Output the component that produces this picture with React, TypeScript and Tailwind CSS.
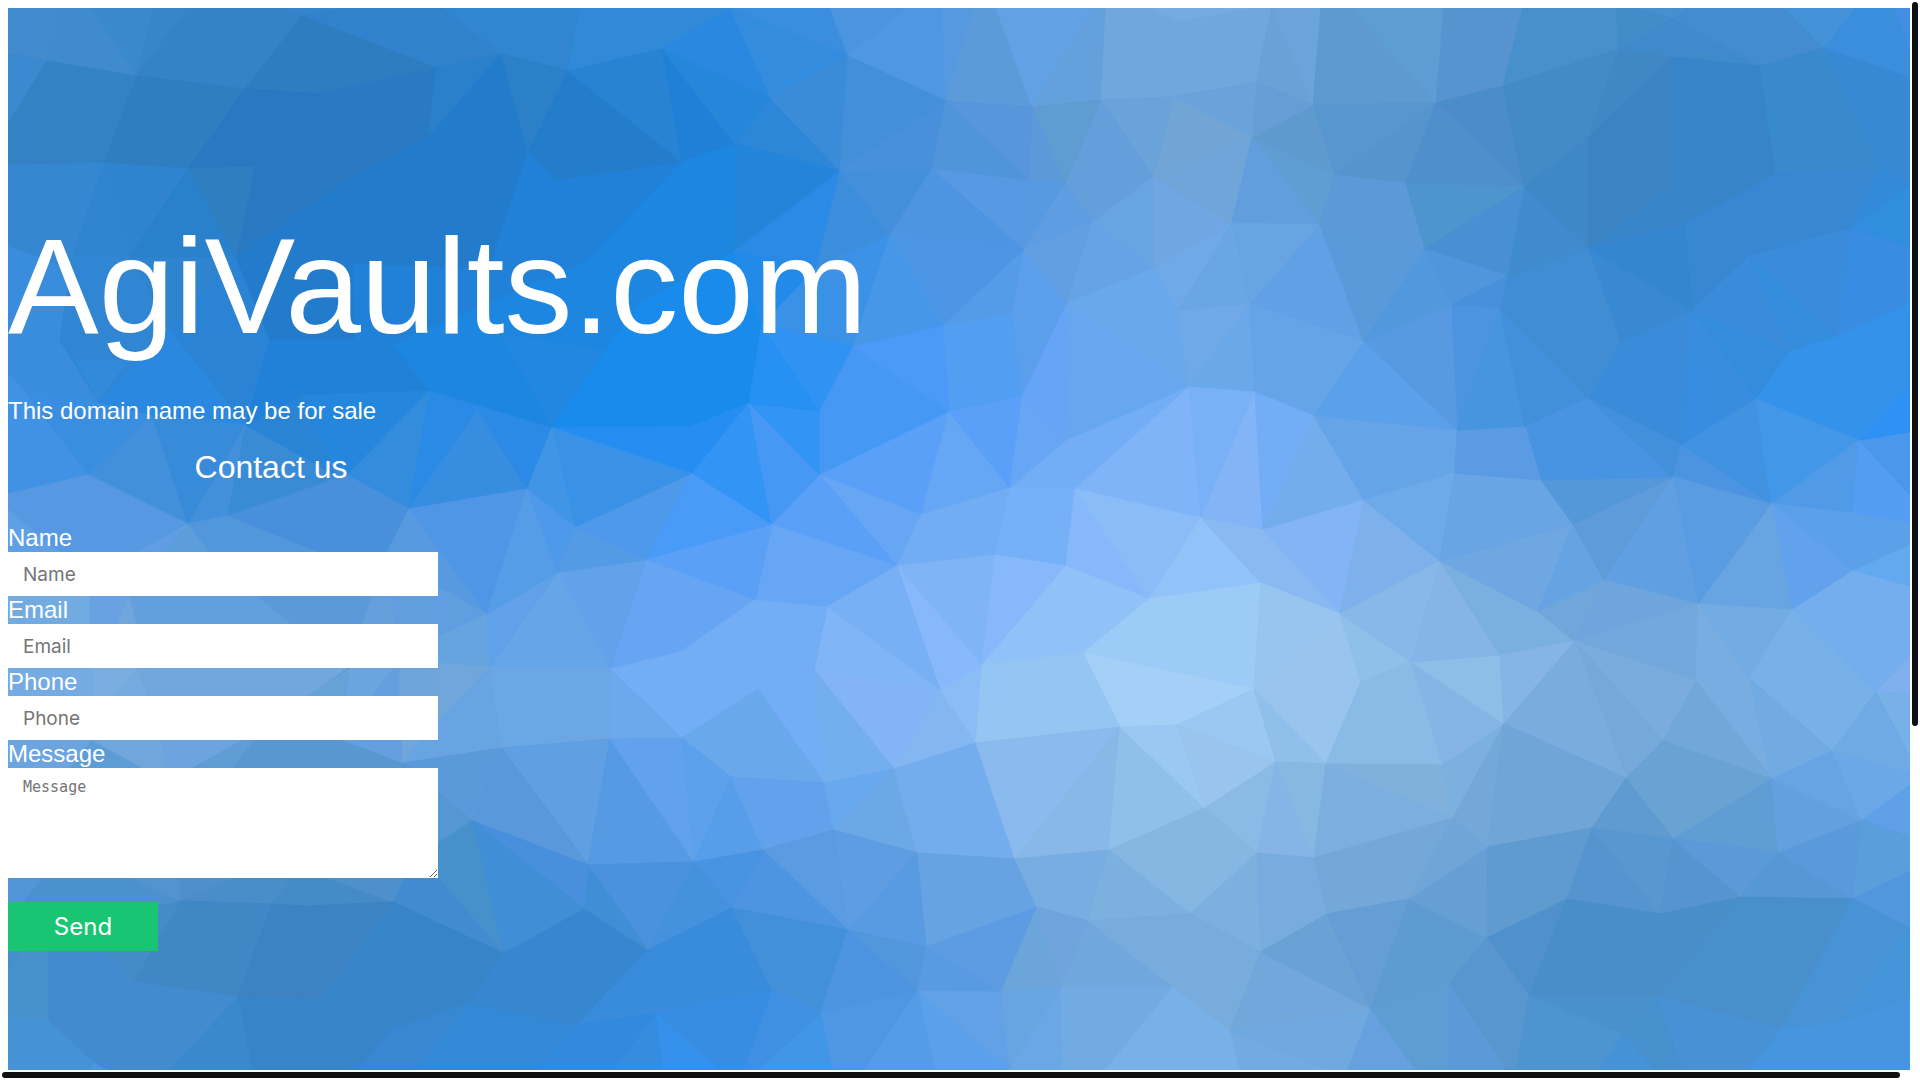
import { clsx } from "clsx";

// Corner points shared by the facets of the backdrop.
const points: Record<string, string> = {
  A1: "47,61", A2: "137,76", A3: "245,89", A4: "317,94", A5: "436,68", A6: "302,16", A7: "429,136", A8: "104,163",
  A9: "188,169", A10: "254,167", A11: "236,257", A12: "130,258", A13: "333,190",
  B1: "501,54", B2: "568,71", B3: "662,49", B4: "528,152", B5: "557,179", B6: "682,162", B7: "735,144", B8: "771,99",
  B9: "730,8", B10: "848,56", B11: "830,8", B12: "946,101", B13: "840,171", B14: "932,169", B15: "890,235",
  B16: "733,252", B17: "817,267", B18: "853,347", B19: "943,326", B20: "762,325",
  C1: "1436,103", C2: "1425,249", C3: "1406,183", C4: "1364,342", C5: "1320,225", C6: "1334,175", C7: "1313,105",
  C8: "1252,138", C9: "1256,82", C10: "1067,303", C11: "1101,100", C12: "1173,97", C13: "1153,177", C14: "1232,223",
  C15: "1154,268", C16: "1093,222", C17: "1065,184", C18: "1032,107", C19: "1029,181", C20: "1024,250",
  C21: "1250,304", C22: "1178,311", C23: "1012,314", C24: "1178,21",
  E1: "430,391", E2: "246,425", E3: "304,395", E4: "88,475", E5: "188,524", E6: "228,516", E7: "152,415",
  E8: "22,389", E9: "98,402", E10: "347,475", E11: "409,509", E12: "477,411",
  F1: "749,403", F2: "820,411", F3: "552,428", F4: "527,489", F5: "692,474", F6: "690,427", F7: "575,528",
  F8: "772,525", F9: "820,475", F10: "558,572", F11: "646,560", F12: "949,412", F13: "921,515", F14: "897,566",
  F15: "755,600", F16: "827,607", F17: "610,669", F18: "680,652", F19: "814,670", F20: "940,690", F21: "758,689",
  G1: "487,614", G2: "490,667", G3: "502,748",
  I1: "403,763", I2: "473,821", I3: "180,901", I4: "272,904", I5: "307,906", I6: "393,902", I7: "133,982",
  I8: "238,997", I9: "322,999", I10: "470,1003",
  J1: "588,865", J2: "584,908", J3: "503,953", J4: "577,1025", J5: "682,738", J6: "824,783", J7: "894,769",
  J9: "731,777", J10: "610,739", J11: "694,862", J12: "763,850", J13: "834,830", J14: "917,853", J15: "648,950",
  J16: "732,908", J17: "848,930", J18: "926,947", J19: "772,990", J20: "820,1014", J21: "917,991", J22: "656,1013",
  K1: "1010,488", K2: "1022,397", K3: "995,555", K4: "982,665", K5: "976,743", K6: "1066,441", K7: "1189,387",
  K8: "1255,392", K9: "1314,416", K10: "1075,489", K11: "1066,566", K12: "1201,518", K13: "1263,530",
  K14: "1364,500", K15: "1149,599", K16: "1261,583", K17: "1340,614", K18: "1083,653", K19: "1254,689",
  K20: "1361,682", K21: "1411,662", K22: "1440,561", K23: "1120,727", K24: "1177,725",
  L1: "1015,859", L2: "1037,907", L3: "1001,992", L4: "1276,762", L5: "1326,764", L6: "1205,808", L7: "1109,850",
  L8: "1257,853", L9: "1314,858", L10: "1190,914", L11: "1088,921", L12: "1061,987", L13: "1173,987",
  L14: "1261,952", L15: "1327,914", L16: "1409,899", L17: "1371,1009", L18: "1230,1031",
  M1: "1443,765", M2: "1504,724", M3: "1500,655", M4: "1453,818", M5: "1626,778", M6: "1663,741", M7: "1772,779",
  M8: "1832,751",
  N1: "1449,983", N2: "1487,938", N3: "1488,847", N4: "1592,828", N5: "1673,839", N6: "1778,852", N7: "1862,820",
  N8: "1567,899", N9: "1660,914", N10: "1741,897", N11: "1853,899", N12: "1529,996", N13: "1656,996",
  N14: "1782,1029", N15: "1622,1034", N16: "1840,1023",
  P1: "1575,641", P2: "1538,612", P3: "1604,580", P4: "1573,524", P5: "1541,480", P6: "1455,473", P7: "1457,431",
  P8: "1525,427", P9: "1588,398", P10: "1682,445", P11: "1673,477", P12: "1771,504", P13: "1756,399",
  P14: "1859,440", P15: "1698,604", P16: "1792,610", P17: "1853,571", P18: "1696,681", P19: "1749,678",
  P20: "1876,692", P21: "1853,513",
  Q1: "1503,86", Q2: "1619,49", Q3: "1672,57", Q4: "1674,18", Q5: "1760,66", Q6: "1824,48", Q7: "1588,138",
  Q8: "1672,186", Q9: "1524,187", Q10: "1588,248", Q11: "1776,174", Q12: "1880,169", Q13: "1684,224",
  Q14: "1851,228", Q15: "1749,256", Q16: "1692,311", Q17: "1836,337", Q18: "1790,352", Q19: "1620,342",
  Q20: "1507,276", Q21: "1500,309", Q22: "1451,305",
};

// Fill, then corners: a point name, or a plain x,y on the outer edge.
const facets: [string, string][] = [
  // top left
  ["#3b8acf", "8,8 60,8 A1 8,124"],
  ["#428ccd", "8,8 60,8 A1 20,53 8,53"],
  ["#408bcd", "60,8 92,8 A2 A1"],
  ["#3a89cd", "92,8 154,8 A2"],
  ["#3886ca", "154,8 188,8 A2"],
  ["#3483c6", "188,8 283,8 A6 A3 A2"],
  ["#3485ce", "283,8 345,8 A6"],
  ["#2f82cb", "345,8 443,8 B1 A5 A6"],
  ["#3285d0", "443,8 580,8 B2 B1"],
  ["#2e7dc0", "A6 A5 A4 A3"],
  ["#2a7ac3", "A4 A5 A7"],
  ["#2a80ca", "A5 B1 A7"],
  ["#3382c4", "8,124 A1 A2 A8 8,165"],
  ["#2f7ec0", "A2 A3 A9 A8"],
  ["#2878c2", "A3 A4 A7 A13 A11 A10 A9"],
  ["#2f7fc0", "A9 A10 A11"],
  ["#3487d0", "8,165 A8 73,255 60,340 8,246"],
  ["#3185d0", "A8 A12 100,300 60,340 73,255"],
  ["#3084cf", "A8 A9 A12"],
  ["#2981cb", "A9 A11 A12"],
  ["#3a8cdc", "8,246 73,270 E9 E8 8,374"],
  ["#3086d3", "73,255 A12 170,330 E9 60,340"],
  ["#2f84d0", "A12 A11 170,330"],
  ["#2b88df", "170,330 E9 E7 E2"],
  ["#2a83d4", "A11 270,340 E2 170,330"],
  ["#237ccb", "A7 B1 B4 500,235 490,269 353,264 355,340 270,340 A11 A13"],
  ["#2180d7", "270,340 355,340 353,264 490,269 B4 B5 B6 587,260 393,345 E1 E3 E2"],
  ["#2b80c8", "B1 B2 B4"],
  ["#237dcb", "B2 B6 B5 B4"],
  ["#308ad8", "580,8 B9 B3 B2"],
  ["#2883d2", "B2 B3 B6"],
  ["#2080d8", "B3 B7 B6"],
  ["#2a88e0", "B3 B9 B8"],
  ["#2586da", "B3 B8 B7"],
  ["#3b8edf", "B9 B11 B10"],
  ["#338cdd", "B9 B10 B8"],
  ["#2c87d8", "B7 B8 B13"],
  ["#2385da", "B7 B13 B16"],
  ["#1c86e0", "E1 393,345 587,260 B6 B7 B16 640,303 F3"],
  ["#2187e0", "500,333 605,350 F3"],
  ["#188bec", "F3 640,303 B16 B20 F1 F6"],
  ["#3a8cd8", "B10 B13 B8"],
  ["#2a8ae6", "B16 B13 B17"],
  ["#228bea", "B16 B17 B20"],
  ["#3c8edd", "B13 B15 B17"],
  ["#3c92e6", "B17 B15 B18"],
  ["#3a92e6", "B17 B18 B20"],
  // top middle
  ["#4a94e0", "B11 908,8 B10"],
  ["#4f97e2", "908,8 942,8 B12 B10"],
  ["#5799e0", "942,8 974,8 B12"],
  ["#5b9bda", "974,8 996,8 C18 B12"],
  ["#438fda", "B10 B12 B13"],
  ["#4990dc", "B12 B14 B13"],
  ["#438fdc", "B13 B14 B15"],
  ["#62a1e4", "996,8 1095,8 C18"],
  ["#63a0dc", "1095,8 1106,8 C11 C18"],
  ["#70a7dc", "1106,8 1272,8 C9 C12 C11"],
  ["#74ace2", "1150,8 1250,8 C24"],
  ["#69a2d6", "1272,8 C7 C9"],
  ["#6ba4da", "1272,8 1321,8 C7"],
  ["#5e9acf", "1321,8 1352,8 C1 C7"],
  ["#5e9dd4", "1352,8 1444,8 C1"],
  ["#5896d0", "C7 C1 C6"],
  ["#5694cd", "C1 C3 C6"],
  ["#5e9ace", "C7 C8 C6"],
  ["#5f9dd2", "C8 C6 C5"],
  ["#659ed4", "C9 C7 C8"],
  ["#6aa3da", "C9 C12 C8"],
  ["#70a5d6", "C12 C13 C8"],
  ["#69a3da", "C11 C12 C13"],
  ["#649fdc", "C11 C13 C16 C17"],
  ["#5e9cd2", "C18 C11 C17"],
  ["#5b99da", "C18 C17 C19"],
  ["#5796da", "B12 C18 C19"],
  ["#5095da", "B12 C19 B14"],
  ["#5799e2", "B14 C19 C20"],
  ["#4d95e2", "B14 C20 B15"],
  ["#4d96e6", "B15 C20 B19"],
  ["#4797e8", "B15 B19 B18"],
  ["#559ce8", "C20 C23 B19"],
  ["#529ef2", "B19 C23 K2 F12"],
  ["#5a9eec", "C20 C10 K2 C23"],
  ["#589ae2", "C19 C17 C20"],
  ["#5f9de2", "C17 C16 C20"],
  ["#629fe2", "C20 C16 C10"],
  ["#66a3e6", "C16 C15 C10"],
  ["#68a4e2", "C16 C13 C15"],
  ["#70a6e2", "C13 C14 C15"],
  ["#70a5da", "C13 C8 C14"],
  ["#629ede", "C8 C5 C14"],
  ["#70a9e8", "C14 C22 C15"],
  ["#6ba6e4", "C14 C21 C22"],
  ["#68a4e2", "C14 C5 C21"],
  ["#62a0e6", "C5 C4 C21"],
  ["#5a9adb", "C5 C2 C4"],
  ["#5b99d8", "C5 C6 C3 C2"],
  ["#6aa8ec", "C10 C15 C22 K7"],
  ["#70a9e8", "C22 C21 K7"],
  ["#6aa8ea", "C21 K8 K7"],
  ["#66a4e8", "C21 C4 K9 K8"],
  // top right
  ["#5794cf", "1444,8 1523,8 Q1 C1"],
  ["#4890cc", "1523,8 1616,8 Q2 Q1"],
  ["#438cca", "1616,8 1640,8 Q4 Q2"],
  ["#4790d0", "1640,8 1688,8 Q4"],
  ["#3f8acb", "Q2 Q4 Q5 Q3"],
  ["#428ccf", "Q4 1688,8 1785,8 Q6 Q5"],
  ["#4493d8", "1785,8 1856,8 Q6"],
  ["#3b8edb", "1856,8 1894,8 1910,50 1910,78 Q6"],
  ["#428ee2", "1894,8 1910,8 1910,50"],
  ["#4a8dca", "C1 Q1 Q9"],
  ["#438ac6", "Q1 Q2 Q7 Q9"],
  ["#4087c6", "Q2 Q3 Q7"],
  ["#3d82c3", "Q3 Q8 Q10 Q7"],
  ["#3f88c8", "Q9 Q7 Q10"],
  ["#3785c8", "Q3 Q5 Q11 Q13 Q10 Q8"],
  ["#3989cd", "Q5 Q6 Q12 Q11"],
  ["#3889d4", "Q6 1910,78 1910,186 Q12"],
  ["#3787d2", "Q11 Q12 Q14 Q15 Q16 Q13"],
  ["#338ad9", "Q12 1910,186 Q14"],
  ["#318dde", "1910,186 1910,249 Q14"],
  ["#388de2", "Q14 1910,249 1910,303 Q17"],
  ["#3a8cda", "Q15 Q14 Q17"],
  ["#348cdc", "Q15 Q17 Q18"],
  ["#3a8cda", "Q15 Q16 Q18"],
  ["#348cdc", "Q16 Q18 P13"],
  ["#3592ea", "Q18 Q17 1910,303 1910,385 P14 P13"],
  ["#388de0", "Q16 P13 P10"],
  ["#3a8cda", "Q16 Q19 P9 P10"],
  ["#3486d0", "Q10 Q13 Q16"],
  ["#3888d2", "Q10 Q16 Q19"],
  ["#408dd3", "Q10 Q19 P9 Q21 Q20"],
  ["#408bcd", "Q9 Q10 Q20"],
  ["#4e8fcc", "C1 C3 Q9"],
  ["#4e94ce", "C3 C2 Q9"],
  ["#4890d2", "C2 Q9 Q20"],
  ["#5196dc", "C2 Q20 Q22"],
  ["#4990dc", "Q20 Q21 Q22"],
  ["#4c94e2", "Q21 Q22 P7"],
  ["#4794df", "Q21 P7 P8"],
  ["#4290dc", "Q21 P8 P9"],
  ["#5298dd", "C2 C4 Q22"],
  ["#579ae2", "C4 Q22 P7"],
  ["#5ba0ea", "C4 P7 K9"],
  // middle left
  ["#318bda", "75,360 128,360 E9"],
  ["#398ee2", "8,374 E8 E9 E7 E4"],
  ["#4192e4", "8,374 E8 E4 8,494"],
  ["#2b88e0", "E9 170,345 E2 E7"],
  ["#4290dc", "E7 E4 E5"],
  ["#388bd9", "E7 E2 E5"],
  ["#4290dc", "E2 E6 E5"],
  ["#398bd6", "E2 E10 E6"],
  ["#2a84d6", "E2 E3 315,420 335,475"],
  ["#2486dc", "E3 E1 E10 330,460"],
  ["#338cdc", "E1 E11 E10"],
  ["#2a8be6", "E1 E12 E11"],
  ["#2a8ae6", "E1 F3 F4 E12"],
  ["#378de0", "E12 F4 E11"],
  ["#5699e2", "8,494 E4 E5 137,552 60,552 8,510"],
  ["#5f9fe6", "8,510 60,552 8,552"],
  ["#609de2", "E5 165,552 137,552"],
  ["#5b9edb", "E5 210,552 165,552"],
  ["#5297dc", "E5 E6 320,552 210,552"],
  ["#4890dc", "E6 E10 E11 387,552 320,552"],
  ["#589ae0", "E11 G1 438,587 387,552"],
  ["#4f97e6", "E11 F4 G1"],
  ["#5f9fe0", "438,587 G1 438,637"],
  ["#66a4e0", "438,637 G1 G2 438,663"],
  ["#70a6da", "438,663 G2 438,722"],
  ["#68a4e2", "G2 G3 I1 402,740 438,722"],
  // strips behind the field labels
  ["#72abe2", "8,596 90,596 90,624 8,624"],
  ["#68a2e2", "90,596 130,596 117,624 90,624"],
  ["#6fa6dc", "130,596 137,624 117,624"],
  ["#649fdd", "130,596 257,596 292,624 137,624"],
  ["#5b99da", "257,596 372,596 363,624 292,624"],
  ["#66a0dc", "372,596 391,596 395,624 363,624"],
  ["#619ddf", "391,596 438,596 438,624 395,624"],
  ["#73abe2", "8,668 94,668 94,696 8,696"],
  ["#7aaee0", "94,668 137,668 115,696 94,696"],
  ["#75abde", "137,668 148,696 115,696"],
  ["#72a7dc", "137,668 347,668 308,696 148,696"],
  ["#67a2d6", "350,668 347,696 308,696"],
  ["#6ba5e0", "350,668 393,668 373,696 347,696"],
  ["#659fe0", "393,668 400,668 400,696 373,696"],
  ["#6fa6da", "400,668 438,668 438,696 400,696"],
  ["#6ba4df", "8,740 92,740 70,768 8,768"],
  ["#5d9dd6", "92,740 143,768 70,768"],
  ["#70a6dc", "92,740 162,740 166,768 143,768"],
  ["#6ba4df", "162,740 243,740 193,768 166,768"],
  ["#5f9dd4", "243,740 263,740 233,768 193,768"],
  ["#5997d1", "255,740 343,740 I1 405,768 233,768"],
  ["#659fe0", "343,740 402,740 I1"],
  ["#70a6dc", "402,740 420,740 I1"],
  // centre
  ["#268ef2", "F3 F6 F1 F5"],
  ["#3a92e6", "F3 F5 F7"],
  ["#4095e6", "F3 F7 F4"],
  ["#3294f5", "F1 F8 F5"],
  ["#4798f5", "F1 F9 F8"],
  ["#3294f5", "F1 F2 F9"],
  ["#2790f3", "B20 F2 F1"],
  ["#3093f4", "B20 B18 F2"],
  ["#4b9af8", "B18 B19 F12"],
  ["#4598f4", "B18 F12 F9 F2"],
  ["#4e99ea", "F5 F11 F7"],
  ["#4a9bf8", "F5 F8 F11"],
  ["#5ba0f8", "F9 F12 F13"],
  ["#66a6f4", "F9 F13 F14"],
  ["#5ba0f8", "F9 F14 F8"],
  ["#66a6f5", "F8 F14 F16 F15"],
  ["#5ba0f7", "F8 F15 F11"],
  ["#65a5f4", "F11 F15 F18 F17"],
  ["#62a2ea", "F10 F11 F17"],
  ["#66a5e8", "F10 F17 G2"],
  ["#60a1e9", "F10 G2 G1"],
  ["#569de8", "F4 F10 G1"],
  ["#4f99ec", "F4 F7 F10"],
  ["#549be6", "F7 F11 F10"],
  ["#66a7f5", "F12 K1 F13"],
  ["#5ba0f8", "F12 K2 K1"],
  ["#72adf4", "F13 K1 K3 F14"],
  ["#7fb4f7", "F14 K3 K4"],
  ["#87b8fb", "F14 K4 F20"],
  ["#78b0f6", "F14 F20 F16"],
  ["#80b5f7", "F16 F20 F19"],
  ["#72adf5", "F17 F18 F15 F16 F19 J6 F21 J5"],
  ["#82b4f7", "F19 F20 J7"],
  ["#84b7f2", "F20 K5 J7"],
  ["#8abdf5", "F20 K4 K5"],
  ["#73aeee", "F19 J7 J6"],
  ["#6aa8ec", "J5 F21 J6 J9"],
  ["#6ba9ec", "F17 J5 J10"],
  ["#6ba7e5", "F17 J10 G3 G2"],
  ["#66a6f5", "K2 K6 K1"],
  ["#65a4f6", "K2 C10 K6"],
  ["#67a7f0", "C10 K7 K6"],
  ["#72adf5", "K1 K6 K7 K10"],
  ["#7fb5f8", "K7 K12 K10"],
  ["#78b1f6", "K7 K8 K12"],
  ["#83b4f6", "K8 K13 K12"],
  ["#72adf5", "K8 K9 K13"],
  ["#74adec", "K9 K14 K13"],
  ["#82b4f6", "K13 K14 K17"],
  ["#7eb1ec", "K14 K22 K17"],
  ["#76b0f6", "K1 K10 K11 K3"],
  ["#87b8fb", "K10 K15 K11"],
  ["#8abdf8", "K10 K12 K15"],
  ["#92c3f8", "K12 K16 K15"],
  ["#8ab9f2", "K12 K13 K17 K16"],
  ["#88b8fc", "K3 K11 K4"],
  ["#90c2f8", "K11 K15 K18 K4"],
  ["#9ccbf8", "K15 K16 K19 K18"],
  ["#97c5f0", "K16 K17 K19"],
  ["#98c4ee", "K17 K20 L5 K19"],
  ["#8fc0ea", "K17 K21 K20"],
  ["#87b8e8", "K17 K22 K21"],
  ["#a4d0f8", "K18 K19 K24 K23"],
  ["#95c5f2", "K4 K18 K23 K5"],
  ["#9bc8f2", "K19 L4 K24"],
  ["#8fbfea", "K19 L5 L4"],
  ["#8abae6", "K20 K21 M1 L5"],
  ["#86b5e5", "K21 M2 M1"],
  ["#8dbee8", "K21 M3 M2"],
  ["#86b4e6", "K22 M3 K21"],
  // middle right
  ["#66a4e8", "K14 K9 P7 P6"],
  ["#6eaaea", "K14 P6 K22"],
  ["#7ab0e0", "K22 P2 P1 M3"],
  ["#86b4e6", "M3 P1 M2"],
  ["#6fa7e3", "K22 P4 P2"],
  ["#69a4e4", "K22 P6 P5 P4"],
  ["#66a3e4", "P2 P4 P3"],
  ["#5d9bda", "P4 P11 P3"],
  ["#5498da", "P5 P11 P4"],
  ["#4994e2", "P5 P8 P9 P11"],
  ["#5a9be4", "P6 P7 P8 P5"],
  ["#4290dc", "P9 P10 P11"],
  ["#4c94e2", "P10 P12 P11"],
  ["#4292e2", "P10 P13 P12"],
  ["#4297e8", "P13 P14 P12"],
  ["#509ae8", "P12 P14 P21"],
  ["#539ef4", "P14 1910,495 1910,523 P21"],
  ["#4a98ee", "P14 1910,432 1910,495"],
  ["#3091f4", "P14 1910,385 1910,432"],
  ["#5ca0ea", "P12 P21 1910,523 1910,545 P17"],
  ["#62a2ec", "P12 P17 P16"],
  ["#62a9f0", "P17 1910,545 1910,587"],
  ["#68a4e2", "P12 P16 P15"],
  ["#5a9ce2", "P12 P15 P11"],
  ["#5f9fe2", "P3 P11 P15"],
  ["#70a6da", "P2 P3 P1"],
  ["#6fa5dc", "P3 P15 P1"],
  ["#72a8dc", "P1 P15 P18"],
  ["#78ade2", "P15 P19 M7 P18"],
  ["#72ace2", "P15 P16 P19"],
  ["#78b1e8", "P16 P20 M8 P19"],
  ["#72aae2", "P19 M8 M7"],
  ["#74aeee", "P16 P17 1910,587 1910,657 P20"],
  ["#80b0ee", "P20 1910,657 1910,694"],
  ["#78b0e8", "P20 1910,694 1910,757"],
  ["#6faae4", "P20 1910,757 1910,773 M8"],
  ["#7aaddd", "P1 P18 M6"],
  ["#75a9da", "P1 M6 M5"],
  ["#7aaddd", "P1 M5 M2"],
  ["#72a7da", "P18 M7 M6"],
  // bottom left
  ["#5b9ada", "I1 G3 480,802 I2 438,793"],
  ["#5597d2", "405,768 I1 I2 438,843"],
  ["#4690cc", "I2 J3 438,878 438,843"],
  ["#5396d8", "8,878 43,878 23,902 8,902"],
  ["#4b90cf", "43,878 128,878 I3 158,906 23,902"],
  ["#5393cf", "128,878 180,878 I3"],
  ["#4f90cb", "180,878 235,878 I3"],
  ["#498dc9", "235,878 293,878 I4 I3"],
  ["#458bc8", "293,878 327,878 I6 I5 I4"],
  ["#4e90cb", "327,878 405,878 I6"],
  ["#428bd0", "405,878 438,878 J3 I6"],
  ["#4087c6", "I3 I4 I8 I7"],
  ["#3d82c3", "I4 I5 I6 I9 I8"],
  ["#3785c8", "I6 J3 I10 393,1029 357,1070 252,1070 I8 I9"],
  ["#458bc8", "158,906 I3 I7 88,933"],
  ["#428bce", "48,930 88,933 I7 I8 170,1070 107,1070 94,1063 48,1021"],
  ["#3a89cd", "I8 252,1070 170,1070"],
  ["#458fcc", "8,930 48,930 8,970"],
  ["#4791ce", "8,970 30,945 48,930 48,1021 8,1017"],
  ["#4593d6", "8,1017 48,1021 94,1063 92,1070 8,1070"],
  ["#4a97de", "94,1063 107,1070 92,1070"],
  ["#3787d3", "I10 417,1070 357,1070 393,1029"],
  ["#3389d6", "I10 480,1005 J4 537,1070 417,1070"],
  ["#3787d0", "J3 J2 J15 J4 480,1005 I10"],
  ["#5f9fe2", "G3 J10 J1"],
  ["#5998da", "G3 J1 I2"],
  ["#559ae2", "J10 J11 J1"],
  ["#62a2ec", "J10 J5 J11"],
  ["#5da1ec", "J5 J9 J11"],
  ["#569ee9", "J9 J12 J11"],
  ["#62a2ec", "J9 J6 J13 J12"],
  ["#68a8ee", "J6 J7 J13"],
  ["#6ba8e5", "J7 J14 J13"],
  ["#74adee", "J7 K5 L1 J14"],
  ["#67a3e2", "J14 L1 L2 J18"],
  ["#5e9de2", "J13 J14 J17"],
  ["#599be3", "J14 J18 J17"],
  ["#5b9be2", "J12 J13 J17"],
  ["#4d95e2", "J12 J17 J16"],
  ["#4894e2", "J12 J16 J11"],
  ["#4491de", "J11 J16 J15"],
  ["#4a91de", "J11 J15 J1"],
  ["#408fd6", "J1 J15 J2"],
  ["#4890dd", "I2 J1 J2"],
  ["#408fd6", "I2 J2 J3"],
  ["#398cdb", "J15 J16 J19 J22 J4"],
  ["#428fda", "J16 J17 J20 J19"],
  ["#5297dc", "J17 J18 J21"],
  ["#4c94e2", "J17 J21 J20"],
  ["#5d9ce2", "J18 L2 L3"],
  ["#589be2", "J18 L3 J21"],
  ["#62a1e6", "J21 L3 1010,1070"],
  ["#5ba0ea", "J21 1010,1070 935,1070"],
  ["#559ce8", "J21 935,1070 863,1070"],
  ["#4e97e5", "J21 863,1070 832,1070 J20"],
  ["#4196e8", "J20 832,1070 757,1070"],
  ["#3f90e2", "J19 J20 757,1070 743,1070"],
  ["#378de2", "J19 743,1070 718,1070 J22"],
  ["#3591eb", "J22 718,1070 662,1070"],
  ["#358de0", "J22 662,1070 613,1070"],
  ["#318ade", "J22 613,1070 537,1070 J4"],
  // bottom middle
  ["#8abaee", "K5 K23 L1"],
  ["#87b8e8", "K23 L7 L1"],
  ["#8fc0ea", "K23 L6 L7"],
  ["#9ac8f2", "K23 K24 L6"],
  ["#98c4ee", "K24 L4 L6"],
  ["#8bbae6", "L4 L8 L6"],
  ["#86b4e6", "L4 L9 L8"],
  ["#86b8e2", "L4 L5 L9"],
  ["#86b7e2", "L6 L8 L10 L7"],
  ["#78ade2", "L1 L7 L11 L2"],
  ["#7cb0df", "L7 L10 L11"],
  ["#7cb0df", "L8 L14 L10"],
  ["#79acde", "L8 L9 L15 L14"],
  ["#7cafdf", "L5 M4 L9"],
  ["#80b1dc", "L5 M1 M4"],
  ["#74a8d8", "L9 M4 L16 L15"],
  ["#6ba5da", "L2 L12 L3"],
  ["#6fa4dc", "L2 L11 L12"],
  ["#70a7dc", "L11 L13 L12"],
  ["#78acdd", "L11 L10 L14 L18 L13"],
  ["#72a7db", "L14 L17 L18"],
  ["#69a2d4", "L14 L15 L17"],
  ["#659ed4", "L15 L16 L17"],
  ["#5e9bd0", "L16 N2 N1 L17"],
  ["#659fd4", "L16 N3 N2"],
  ["#70a5d8", "M4 N3 L16"],
  ["#68a4e2", "L3 L12 1010,1070"],
  ["#6ba7e6", "L12 1062,1070 1010,1070"],
  ["#72abe2", "L12 L13 1105,1070 1062,1070"],
  ["#78b0e8", "L13 L18 1240,1070 1105,1070"],
  ["#72abe2", "L18 1330,1070 1240,1070"],
  ["#70a8e0", "L18 L17 1348,1070 1330,1070"],
  ["#66a0df", "L17 1416,1070 1348,1070"],
  ["#5e9dd4", "L17 N1 1449,1070 1416,1070"],
  // bottom right
  ["#7cb0df", "M2 M4 M1"],
  ["#74a8d8", "M2 N3 M4"],
  ["#70a5d8", "M2 M5 N4 N3"],
  ["#69a3d4", "M5 M6 M7 N5"],
  ["#5f9bd0", "M5 N5 N4"],
  ["#5f9dd4", "M7 N6 N5"],
  ["#5f9bd0", "N3 N4 N8 N2"],
  ["#5694cf", "N4 N9 N8"],
  ["#5997d1", "N4 N5 N9"],
  ["#5694cf", "N5 N10 N9"],
  ["#5b99d8", "N5 N6 N10"],
  ["#5698d5", "N6 N11 N10"],
  ["#5a9adc", "N6 N7 N11"],
  ["#649fdf", "M7 N7 N6"],
  ["#68a4e3", "M7 M8 N7"],
  ["#6ca8e8", "M8 1910,773 1910,785 N7"],
  ["#60a0e8", "N7 1910,785 1910,837"],
  ["#5b9edc", "N7 1910,837 1910,871 N11"],
  ["#5197de", "N11 1910,871 1910,928"],
  ["#5090cb", "N2 N8 N12"],
  ["#5995cf", "N1 N2 N12 1517,1070 1506,1070"],
  ["#5b99d8", "N1 1506,1070 1449,1070"],
  ["#498dc9", "N8 N9 N10 N13 N12"],
  ["#488fcb", "N10 N11 N14 N13"],
  ["#4793d6", "N11 1910,928 N16 N14"],
  ["#4394d8", "1910,928 1910,998 N16"],
  ["#4891d5", "N13 N14 1750,1070 1682,1070"],
  ["#4690cd", "N13 1682,1070 1654,1070 N15"],
  ["#4990cc", "N12 N13 N15"],
  ["#4e94d1", "N12 N15 1600,1070 1517,1070"],
  ["#4593d6", "N15 1654,1070 1600,1070"],
  ["#4596df", "N14 N16 1910,998 1910,1070 1750,1070"],
];

const fields = [
  { id: "name", label: "Name", type: "text" },
  { id: "email", label: "Email", type: "email" },
  { id: "phone", label: "Phone", type: "tel" },
];

const control =
  "block w-full rounded-none border-0 bg-white px-[15px] outline-none placeholder:text-[#757575] placeholder:opacity-100";

function Backdrop() {
  return (
    <svg
      className="absolute inset-0 h-full w-full"
      viewBox="8 8 1902 1062"
      preserveAspectRatio="none"
      aria-hidden="true"
    >
      {facets.map(([fill, corners]) => (
        <polygon
          key={corners}
          fill={fill}
          stroke={fill}
          strokeWidth="1"
          strokeLinejoin="round"
          points={corners
            .split(" ")
            .map((corner) => points[corner] ?? corner)
            .join(" ")}
        />
      ))}
    </svg>
  );
}

export default function App() {
  return (
    <div className="flex min-h-screen flex-col bg-white pt-2 pr-[10px] pb-[10px] pl-2">
      <main className="relative grow overflow-hidden bg-[#4b93dc] font-['Liberation_Sans',Arial,sans-serif] text-white">
        <Backdrop />

        <div className="relative pt-[210px] pb-10">
          <h1 className="text-[136px] leading-none">AgiVaults.com</h1>
          <p className="mt-[43px] text-2xl leading-7">This domain name may be for sale</p>

          <form className="w-[430px] max-w-full" onSubmit={(e) => e.preventDefault()}>
            <h2 className="mt-6 mb-[39px] pl-24 text-center text-[32px] leading-9">Contact us</h2>

            {fields.map((field) => (
              <div key={field.id}>
                <label htmlFor={field.id} className="block text-2xl leading-7">
                  {field.label}
                </label>
                <input
                  id={field.id}
                  name={field.id}
                  type={field.type}
                  placeholder={field.label}
                  className={clsx(control, "h-11 font-[Inter,sans-serif] text-[19px] text-black")}
                />
              </div>
            ))}

            <label htmlFor="message" className="block text-2xl leading-7">
              Message
            </label>
            <textarea
              id="message"
              name="message"
              placeholder="Message"
              className={clsx(
                control,
                "h-[110px] resize py-[10px] font-['DejaVu_Sans_Mono',monospace] text-[15px] leading-[18px] text-black",
              )}
            />

            <button
              type="submit"
              className="mt-6 h-[49px] w-[150px] bg-[#19c572] font-[Inter,sans-serif] text-2xl text-white"
            >
              Send
            </button>
          </form>
        </div>
      </main>

      {/* Scroll thumbs */}
      <div className="fixed top-0.5 right-0.5 h-[67%] w-1.5 rounded-full bg-[#0f1011]" />
      <div className="fixed right-5 bottom-0.5 left-0.5 h-1.5 rounded-full bg-[#0f1011]" />
    </div>
  );
}
